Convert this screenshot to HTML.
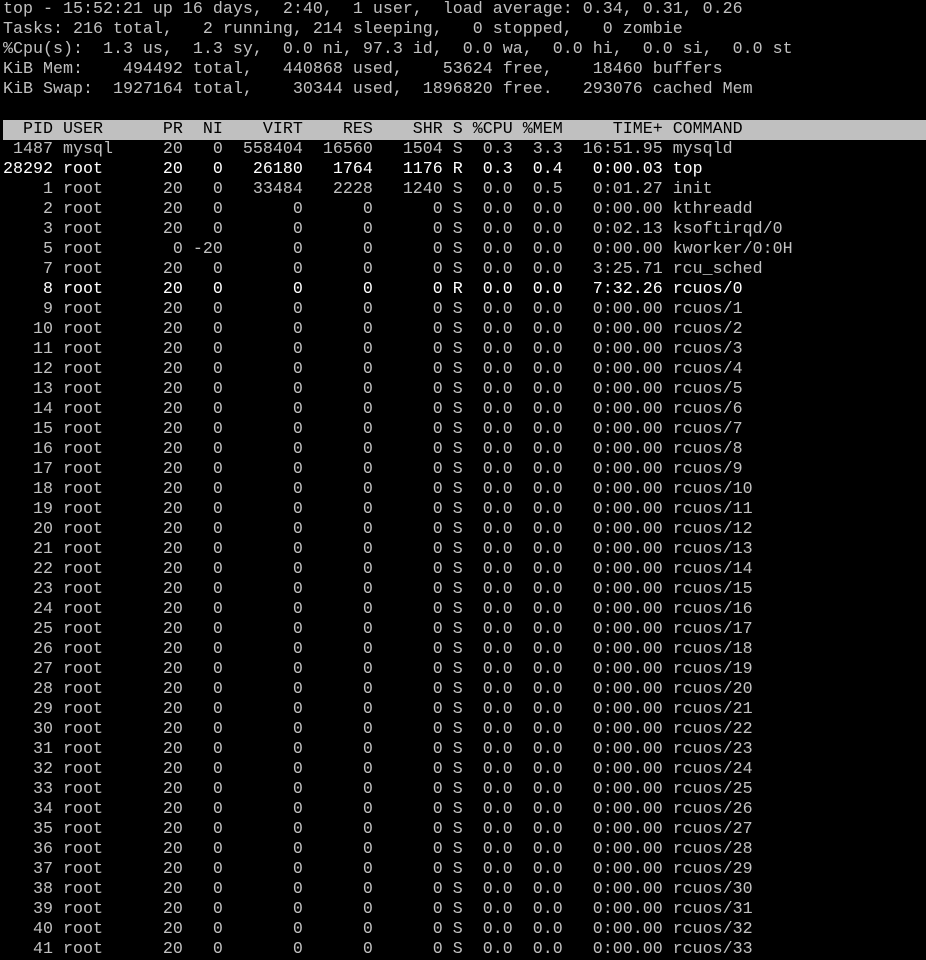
<!DOCTYPE html>
<html><head><meta charset="utf-8"><style>
html,body{margin:0;padding:0;background:#000;width:926px;height:956px;overflow:hidden}
pre{margin:0;position:absolute;left:3px;top:0px;font-family:"Liberation Mono",monospace;font-size:16.67px;line-height:20px;color:#c0c0c0;white-space:pre}
.h{background:#c0c0c0;color:#000;display:inline-block;width:923px}
.b{color:#fff}
</style></head><body><pre>top - 15:52:21 up 16 days,  2:40,  1 user,  load average: 0.34, 0.31, 0.26
Tasks: 216 total,   2 running, 214 sleeping,   0 stopped,   0 zombie
%Cpu(s):  1.3 us,  1.3 sy,  0.0 ni, 97.3 id,  0.0 wa,  0.0 hi,  0.0 si,  0.0 st
KiB Mem:    494492 total,   440868 used,    53624 free,    18460 buffers
KiB Swap:  1927164 total,    30344 used,  1896820 free.   293076 cached Mem

<span class="h">  PID USER      PR  NI    VIRT    RES    SHR S %CPU %MEM     TIME+ COMMAND</span>
 1487 mysql     20   0  558404  16560   1504 S  0.3  3.3  16:51.95 mysqld
<span class="b">28292 root      20   0   26180   1764   1176 R  0.3  0.4   0:00.03 top</span>
    1 root      20   0   33484   2228   1240 S  0.0  0.5   0:01.27 init
    2 root      20   0       0      0      0 S  0.0  0.0   0:00.00 kthreadd
    3 root      20   0       0      0      0 S  0.0  0.0   0:02.13 ksoftirqd/0
    5 root       0 -20       0      0      0 S  0.0  0.0   0:00.00 kworker/0:0H
    7 root      20   0       0      0      0 S  0.0  0.0   3:25.71 rcu_sched
<span class="b">    8 root      20   0       0      0      0 R  0.0  0.0   7:32.26 rcuos/0</span>
    9 root      20   0       0      0      0 S  0.0  0.0   0:00.00 rcuos/1
   10 root      20   0       0      0      0 S  0.0  0.0   0:00.00 rcuos/2
   11 root      20   0       0      0      0 S  0.0  0.0   0:00.00 rcuos/3
   12 root      20   0       0      0      0 S  0.0  0.0   0:00.00 rcuos/4
   13 root      20   0       0      0      0 S  0.0  0.0   0:00.00 rcuos/5
   14 root      20   0       0      0      0 S  0.0  0.0   0:00.00 rcuos/6
   15 root      20   0       0      0      0 S  0.0  0.0   0:00.00 rcuos/7
   16 root      20   0       0      0      0 S  0.0  0.0   0:00.00 rcuos/8
   17 root      20   0       0      0      0 S  0.0  0.0   0:00.00 rcuos/9
   18 root      20   0       0      0      0 S  0.0  0.0   0:00.00 rcuos/10
   19 root      20   0       0      0      0 S  0.0  0.0   0:00.00 rcuos/11
   20 root      20   0       0      0      0 S  0.0  0.0   0:00.00 rcuos/12
   21 root      20   0       0      0      0 S  0.0  0.0   0:00.00 rcuos/13
   22 root      20   0       0      0      0 S  0.0  0.0   0:00.00 rcuos/14
   23 root      20   0       0      0      0 S  0.0  0.0   0:00.00 rcuos/15
   24 root      20   0       0      0      0 S  0.0  0.0   0:00.00 rcuos/16
   25 root      20   0       0      0      0 S  0.0  0.0   0:00.00 rcuos/17
   26 root      20   0       0      0      0 S  0.0  0.0   0:00.00 rcuos/18
   27 root      20   0       0      0      0 S  0.0  0.0   0:00.00 rcuos/19
   28 root      20   0       0      0      0 S  0.0  0.0   0:00.00 rcuos/20
   29 root      20   0       0      0      0 S  0.0  0.0   0:00.00 rcuos/21
   30 root      20   0       0      0      0 S  0.0  0.0   0:00.00 rcuos/22
   31 root      20   0       0      0      0 S  0.0  0.0   0:00.00 rcuos/23
   32 root      20   0       0      0      0 S  0.0  0.0   0:00.00 rcuos/24
   33 root      20   0       0      0      0 S  0.0  0.0   0:00.00 rcuos/25
   34 root      20   0       0      0      0 S  0.0  0.0   0:00.00 rcuos/26
   35 root      20   0       0      0      0 S  0.0  0.0   0:00.00 rcuos/27
   36 root      20   0       0      0      0 S  0.0  0.0   0:00.00 rcuos/28
   37 root      20   0       0      0      0 S  0.0  0.0   0:00.00 rcuos/29
   38 root      20   0       0      0      0 S  0.0  0.0   0:00.00 rcuos/30
   39 root      20   0       0      0      0 S  0.0  0.0   0:00.00 rcuos/31
   40 root      20   0       0      0      0 S  0.0  0.0   0:00.00 rcuos/32
   41 root      20   0       0      0      0 S  0.0  0.0   0:00.00 rcuos/33
</pre></body></html>
